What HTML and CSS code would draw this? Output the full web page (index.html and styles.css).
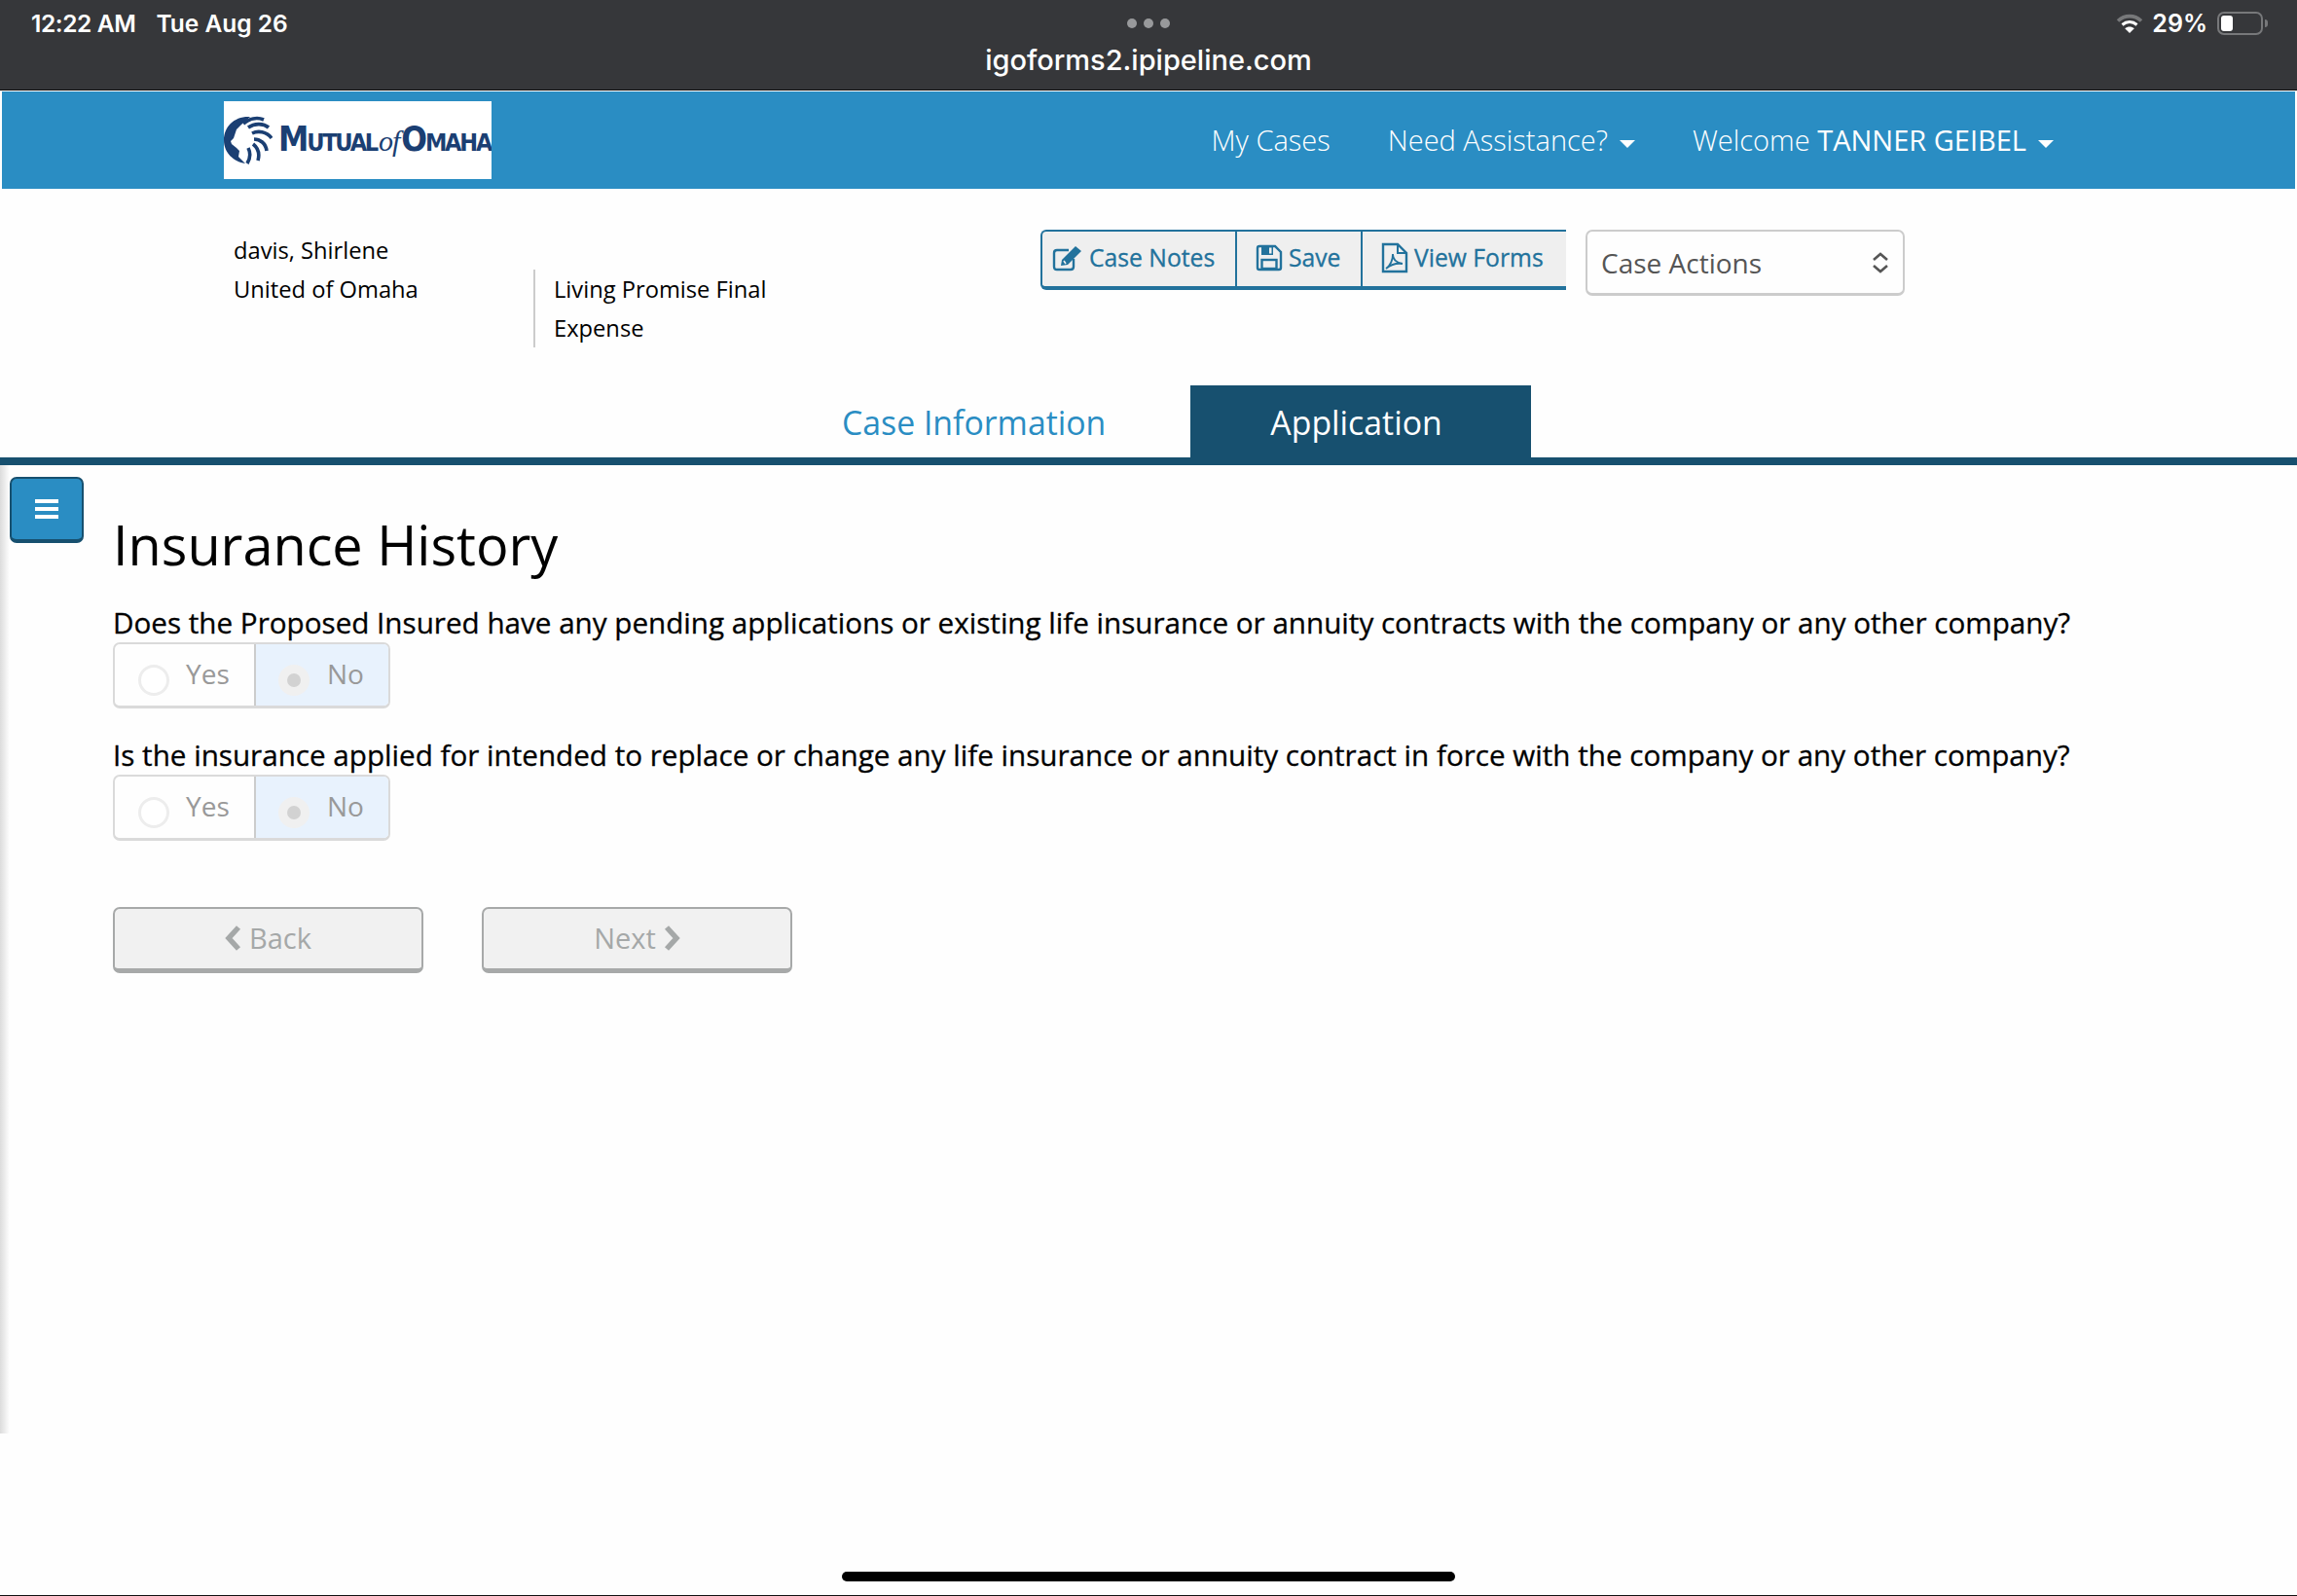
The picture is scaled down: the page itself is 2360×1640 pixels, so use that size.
FILE: index.html
```html
<!DOCTYPE html>
<html lang="en">
<head>
	<meta charset="UTF-8">
	<title>Insurance History</title>
	<link rel="stylesheet" href="styles.css">
</head>
<body>
<div class="status">
	<div class="status-left"><span class="clock">12:22 AM</span><span>Tue Aug 26</span></div>
	<div class="status-mid">
		<div class="dots"><i></i><i></i><i></i></div>
		<div class="url">igoforms2.ipipeline.com</div>
	</div>
	<div class="status-right">
		<svg class="wifi" viewBox="0 0 28 20">
			<path d="M2 7.500C9 1 19 1 26 7.500" fill="none" stroke="#77787a" stroke-width="3.600"/>
			<path d="M6.500 11.500C11 7.600 17 7.600 21.500 11.500" fill="none" stroke="#fff" stroke-width="3"/>
			<path d="M14 20L9.200 15.200C12 13 16 13 18.800 15.200Z" fill="#fff"/>
		</svg>
		<span class="pct">29%</span>
		<div class="battery"><i></i></div>
		<div class="nub"></div>
	</div>
</div>

<div class="navbar">
	<div class="logo">
		<svg class="lion" viewBox="0 0 50 50">
			<path d="M27 1C11 0 0 11 0 25C0 38 10 47 22 49L15 42L16 36L13 33L8 29L7 26L10 23L13 14L18 9Z" fill="#1b3f73"/>
			<path d="M20 8C26 3 34 1 41 4M25 12C31 8 40 7 46 12M29 18C35 15 44 16 49 23M31 24C37 24 43 28 44 36M30 29C35 33 37 39 35 46M25 33C28 39 27 44 24 49" fill="none" stroke="#1b3f73" stroke-width="3.600"/>
		</svg>
		<div class="logo-text"><b>Mutual</b><em>of</em><b>Omaha</b></div>
	</div>
	<div class="nav">
		<a>My Cases</a>
		<a>Need Assistance?<span class="caret"></span></a>
		<a>Welcome <span class="name">TANNER GEIBEL</span><span class="caret"></span></a>
	</div>
</div>

<div class="case-head">
	<div class="case-client">davis, Shirlene<br>United of Omaha</div>
	<div class="case-product">Living Promise Final Expense</div>
	<div class="btn-group">
		<button class="tool tool-notes">
			<svg viewBox="0 0 32 28" class="ico ico-edit">
				<path d="M22 15V23C22 25 21 26 19 26H5C3 26 2 25 2 23V9C2 7 3 6 5 6H17" fill="none" stroke="#22729c" stroke-width="2.400"/>
				<path d="M9 22L10 16L24 2L30 7L16 21Z" fill="#22729c"/>
				<path d="M12 17L14 20" stroke="#efefef" stroke-width="1.600"/>
			</svg>Case Notes
		</button>
		<button class="tool tool-save">
			<svg viewBox="0 0 28 28" class="ico ico-save">
				<path d="M2 4C2 2.500 2.500 2 4 2H20L26 8V24C26 25.500 25.500 26 24 26H4C2.500 26 2 25.500 2 24Z" fill="none" stroke="#22729c" stroke-width="2.400"/>
				<rect x="6" y="2" width="12" height="9" fill="#22729c"/>
				<rect x="14" y="3.500" width="2.500" height="6" fill="#efefef"/>
				<rect x="6.500" y="16" width="15" height="9" fill="none" stroke="#22729c" stroke-width="2.400"/>
			</svg>Save
		</button>
		<button class="tool tool-forms">
			<svg viewBox="0 0 28 32" class="ico ico-pdf">
				<path d="M2 2H17L26 11V30H2Z" fill="none" stroke="#22729c" stroke-width="2.400"/>
				<path d="M17 2V11H26" fill="none" stroke="#22729c" stroke-width="2"/>
				<path d="M5 27C9 24 12 18 12 12C12 18 15 21 22 22C16 21 10 23 5 27Z" fill="none" stroke="#22729c" stroke-width="1.800"/>
			</svg>View Forms
		</button>
	</div>
	<div class="select">
		<span>Case Actions</span>
		<svg viewBox="0 0 20 22" class="select-arrows">
			<path d="M3 8L10 2L17 8M3 14L10 20L17 14" fill="none" stroke="#555" stroke-width="2.600"/>
		</svg>
	</div>
</div>

<div class="tabs">
	<a class="tab">Case Information</a>
	<a class="tab active">Application</a>
</div>

<div class="wrap">
	<div class="side"></div>
	<button class="toggle"><i></i><i></i><i></i></button>
	<div class="form">
		<h1>Insurance History</h1>

		<div class="question">Does the Proposed Insured have any pending applications or existing life insurance or annuity contracts with the company or any other company?</div>
		<div class="radios">
			<div class="radio-cell"><span class="radio"></span><span class="radio-label">Yes</span></div>
			<div class="radio-cell on"><span class="radio"></span><span class="radio-label">No</span></div>
		</div>

		<div class="question">Is the insurance applied for intended to replace or change any life insurance or annuity contract in force with the company or any other company?</div>
		<div class="radios">
			<div class="radio-cell"><span class="radio"></span><span class="radio-label">Yes</span></div>
			<div class="radio-cell on"><span class="radio"></span><span class="radio-label">No</span></div>
		</div>

		<div class="pager">
			<button class="page-btn">
				<svg viewBox="0 0 17 26" class="chev"><path d="M14 2L4 13L14 24" fill="none" stroke="#a5a8a8" stroke-width="5.500"/></svg>Back
			</button>
			<button class="page-btn">Next
				<svg viewBox="0 0 17 26" class="chev"><path d="M3 2L13 13L3 24" fill="none" stroke="#a5a8a8" stroke-width="5.500"/></svg>
			</button>
		</div>
	</div>
</div>

<div class="foot"><div class="home-bar"></div></div>
</body>
</html>
```

FILE: styles.css
```css
html, body {
	margin: 0;
	background: #fefefe;
	font-family: "Open Sans", sans-serif;
	color: #000;
}
body {
	width: 2360px;
	height: 1640px;
	display: flex;
	flex-direction: column;
	overflow: hidden;
}
button {
	font-family: inherit;
}

/* ios bar */
.status {
	height: 92px;
	flex: none;
	background: #36373a;
	border-bottom: 1px solid #0e0e0e;
	display: grid;
	grid-template-columns: 1fr 1fr 1fr;
	color: #fff;
	font-family: Inter, sans-serif;
	font-weight: 500;
}
.status-left {
	padding: 10px 0 0 32px;
	font-size: 24.500px;
	line-height: 28px;
	font-weight: 600;
	display: flex;
	gap: 21px;
}
.clock {
	letter-spacing: -0.400px;
}
.status-mid {
	display: flex;
	flex-direction: column;
	align-items: center;
}
.dots {
	display: flex;
	gap: 7px;
	margin-top: 19px;
}
.dots i {
	width: 10px;
	height: 10px;
	border-radius: 50%;
	background: #98999b;
}
.url {
	font-size: 29px;
	line-height: 36px;
	margin-top: 15px;
}
.status-right {
	display: flex;
	justify-content: flex-end;
	align-items: flex-start;
	padding: 12px 30px 0 0;
}
.wifi {
	width: 28px;
	height: 20px;
	margin-top: 2px;
}
.pct {
	font-size: 25px;
	line-height: 24px;
	font-weight: 600;
	margin-left: 9px;
}
.battery {
	width: 39px;
	height: 16px;
	margin-left: 10px;
	border: 2px solid #77787a;
	border-radius: 7px;
	padding: 2px;
}
.battery i {
	display: block;
	width: 12px;
	height: 16px;
	background: #fff;
	border-radius: 3px;
}
.nub {
	width: 3px;
	height: 8px;
	margin: 8px 0 0 2px;
	background: #77787a;
	border-radius: 0 3px 3px 0;
}

/* blue nav */
.navbar {
	height: 100px;
	flex: none;
	margin: 1px 2px 0;
	background: #2a8dc3;
	display: flex;
	align-items: center;
}
.logo {
	width: 275px;
	height: 80px;
	margin-left: 228px;
	background: #fff;
	display: flex;
	align-items: center;
	overflow: hidden;
}
.lion {
	width: 50px;
	height: 50px;
	flex: none;
}
.logo-text {
	margin-left: 6px;
	flex: none;
	display: flex;
	align-items: baseline;
	color: #1b3f73;
	font-family: "DejaVu Sans Condensed", "DejaVu Sans", sans-serif;
	font-size: 35px;
	line-height: 40px;
	font-variant: small-caps;
	letter-spacing: -2.200px;
}
.logo-text em {
	font-family: "Liberation Serif", serif;
	font-size: 30px;
	font-variant: normal;
	letter-spacing: -1px;
	margin: 0 2px;
}
.nav {
	margin-left: auto;
	margin-top: -2px;
	padding-right: 248px;
	display: flex;
	gap: 59px;
	color: #fff;
	font-size: 29px;
	font-weight: 300;
}
.name {
	font-weight: 400;
}
.caret {
	display: inline-block;
	margin-left: 12px;
	vertical-align: 3px;
	border-top: 8px solid #fff;
	border-left: 8px solid transparent;
	border-right: 8px solid transparent;
}

/* case header */
.case-head {
	height: 202px;
	flex: none;
	display: flex;
	align-items: flex-start;
	font-size: 23.700px;
	line-height: 40px;
}
.case-client {
	width: 308px;
	margin: 43px 0 0 240px;
}
.case-product {
	width: 250px;
	margin: 83px 250px 0 0;
	padding-left: 19px;
	border-left: 2px solid #ccc;
}
.btn-group {
	display: flex;
	height: 62px;
	margin-top: 42px;
	box-sizing: border-box;
	border: solid #22729c;
	border-width: 2px 0 4px 2px;
	border-radius: 6px 0 0 6px;
	background: #efefef;
	overflow: hidden;
}
.tool {
	display: flex;
	align-items: center;
	height: 100%;
	padding: 0 0 3px 10px;
	border: 0;
	border-right: 2px solid #22729c;
	background: none;
	color: #22729c;
	font-size: 24.700px;
	-webkit-text-stroke: 0.300px #22729c;
}
.tool-notes { width: 200px; }
.tool-save { width: 129px; padding-left: 19px; }
.tool-forms { width: 209px; padding-left: 19px; border-right-width: 0; }
.ico {
	flex: none;
	margin-right: 6px;
}
.ico-edit { width: 32px; height: 28px; }
.ico-save { width: 28px; height: 28px; }
.ico-pdf { width: 28px; height: 32px; }
.select {
	width: 328px;
	height: 68px;
	margin: 42px 0 0 20px;
	box-sizing: border-box;
	border: 2px solid #ccc;
	border-bottom-width: 3px;
	border-radius: 7px;
	padding: 0 13px 0 14px;
	display: flex;
	align-items: center;
	justify-content: space-between;
	color: #555;
	font-size: 28px;
}
.select-arrows {
	width: 20px;
	height: 22px;
}

/* tabs */
.tabs {
	height: 74px;
	flex: none;
	display: flex;
	padding-left: 783px;
	border-bottom: 8px solid #17506f;
}
.tab {
	padding: 0 82px;
	font-size: 33.800px;
	line-height: 76px;
	color: #2a8dc3;
}
.tab.active {
	margin-left: 5px;
	padding: 0 91px 0 82px;
	background: #17506f;
	color: #fff;
}

/* page */
.wrap {
	height: 995px;
	flex: none;
	display: flex;
	align-items: flex-start;
}
.side {
	width: 10px;
	height: 100%;
	flex: none;
	background: linear-gradient(to right, #dcdcdc, #fefefe);
}
.toggle {
	width: 76px;
	height: 68px;
	flex: none;
	margin-top: 12px;
	padding: 0;
	box-sizing: border-box;
	border: solid #17506f;
	border-width: 2px 2px 4px;
	border-radius: 7px;
	background: #2a8dc3;
	display: flex;
	flex-direction: column;
	align-items: center;
	justify-content: center;
	gap: 4px;
}
.toggle i {
	width: 24px;
	height: 4px;
	background: #fff;
}
.form {
	margin-left: 30px;
}
h1 {
	margin: 43px 0 0;
	font-size: 55.800px;
	font-weight: 400;
	line-height: 76px;
}
.question {
	margin-top: 23px;
	font-size: 29.630px;
	line-height: 40px;
	white-space: nowrap;
	-webkit-text-stroke: 0.300px #000;
}
.radios {
	width: 285px;
	height: 68px;
	box-sizing: border-box;
	border: 2px solid #dadada;
	border-bottom-width: 3px;
	border-radius: 7px;
	display: flex;
	overflow: hidden;
}
.radios + .question {
	margin-top: 28px;
}
.radio-cell {
	width: 143px;
	display: flex;
	align-items: flex-start;
	padding: 12px 0 0 24px;
	box-sizing: border-box;
	color: #999;
	font-size: 28px;
	line-height: 36px;
}
.radio-cell.on {
	flex: 1;
	border-left: 2px solid #ccc;
	background: #e8f2fd;
	padding-left: 23px;
}
.radio {
	width: 32px;
	height: 32px;
	margin: 9px 17px 0 0;
	box-sizing: border-box;
	border: 3px solid #ededed;
	border-radius: 50%;
	background: #fff;
	display: flex;
	align-items: center;
	justify-content: center;
	flex: none;
}
.on .radio {
	margin-right: 18px;
	background: #f0f0f0;
	border-color: #f0f0f0;
}
.on .radio::after {
	content: "";
	width: 14px;
	height: 14px;
	border-radius: 50%;
	background: #d2d2d2;
}
.pager {
	display: flex;
	gap: 60px;
	margin-top: 68px;
}
.page-btn {
	width: 319px;
	height: 68px;
	box-sizing: border-box;
	padding: 0 0 2px;
	border: 2px solid #a7a9a9;
	border-bottom-width: 5px;
	border-radius: 7px;
	background: #f1f1f1;
	color: #a5a8a8;
	font-size: 29px;
	display: flex;
	align-items: center;
	justify-content: center;
	gap: 8px;
}
.chev {
	width: 17px;
	height: 26px;
}

/* home indicator */
.foot {
	flex: 1;
	display: flex;
	flex-direction: column;
	align-items: center;
	justify-content: flex-end;
	padding-bottom: 14px;
	border-bottom: 1px solid #111;
}
.home-bar {
	width: 630px;
	height: 10px;
	border-radius: 5px;
	background: #000;
}
```
